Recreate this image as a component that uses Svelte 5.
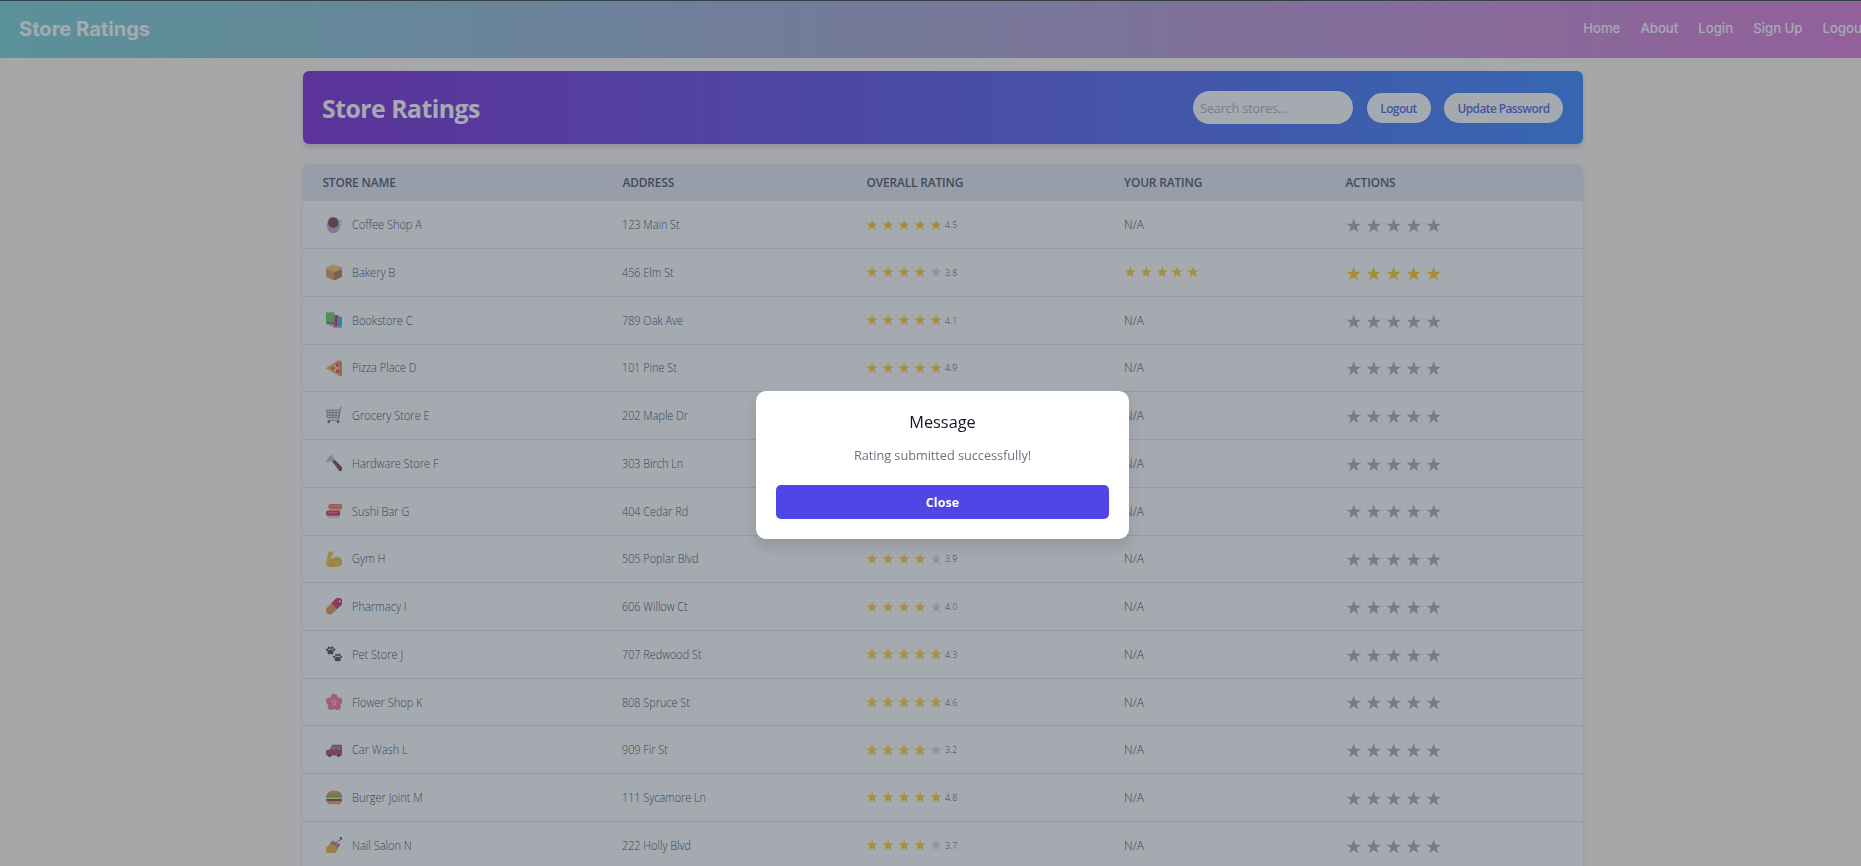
<script>
  const links = ['Home', 'About', 'Login', 'Sign Up', 'Logout'];
  const stores = [
    ['coffee', 'Coffee Shop A', '123 Main St', 5, '4.5'],
    ['bread', 'Bakery B', '456 Elm St', 4, '3.8'],
    ['books', 'Bookstore C', '789 Oak Ave', 5, '4.1'],
    ['pizza', 'Pizza Place D', '101 Pine St', 5, '4.9'],
    ['cart', 'Grocery Store E', '202 Maple Dr', 4, '3.5'],
    ['hammer', 'Hardware Store F', '303 Birch Ln', 4, '4.2'],
    ['sushi', 'Sushi Bar G', '404 Cedar Rd', 5, '4.7'],
    ['gym', 'Gym H', '505 Poplar Blvd', 4, '3.9'],
    ['pill', 'Pharmacy I', '606 Willow Ct', 4, '4.0'],
    ['paws', 'Pet Store J', '707 Redwood St', 5, '4.3'],
    ['flower', 'Flower Shop K', '808 Spruce St', 5, '4.6'],
    ['car', 'Car Wash L', '909 Fir St', 4, '3.2'],
    ['burger', 'Burger Joint M', '111 Sycamore Ln', 5, '4.8'],
    ['nails', 'Nail Salon N', '222 Holly Blvd', 4, '3.7']
  ].map(([icon, name, address, filled, score]) => ({ icon, name, address, filled, score, mine: name === 'Bakery B' ? 5 : 0 }));
  const five = [1, 2, 3, 4, 5];
</script>

{#snippet star(cls)}
  <svg class="star {cls}" viewBox="0 0 20 20"><path d="M10 0.8 12.4 7.4H19.4L13.8 11.6 15.9 18.6 10 14.4 4.1 18.6 6.2 11.6 0.6 7.4H7.6Z" /></svg>
{/snippet}

{#snippet glyph(kind)}
  <svg class="icon" viewBox="0 0 16 16">
    {#if kind === 'coffee'}
      <circle cx="12.6" cy="6" r="2.6" fill="none" stroke="#c9b4dc" stroke-width="1.2" />
      <path d="M.8 6C.6 12 2.4 15.8 7.2 15.8S13.8 12 13.6 6Z" fill="#b79fce" />
      <circle cx="7.1" cy="5.6" r="5.7" fill="#a58fb0" /><circle cx="7.1" cy="5.5" r="5" fill="#6b3436" />
    {:else if kind === 'bread'}
      <path d="M0 4 7 .4 16 3.6V12L8 16 0 12.4Z" fill="#c78642" />
      <path d="M0 4 7 .4 16 3.6 15 6 8 8 0 5Z" fill="#f5bd5b" />
      <path d="M8 8 16 5V12L8 16Z" fill="#b56b34" /><path d="M0 5 7.6 8V15.4L.4 12.2Z" fill="#d39652" />
    {:else if kind === 'books'}
      <path d="M7 3H12V15H7Z" fill="#b21b55" /><path d="M11 4.5H16.5V14.5H11Z" fill="#28a6dc" />
      <path d="M0 .4H8.4V11H0Z" fill="#52c94d" /><path d="M0 10H8V12H1Z" fill="#437b50" />
      <path d="M3 12H8V14H3ZM8 14H16V16H8Z" fill="#bda6dc" /><path d="M8 4H9V14H8Z" fill="#ef4777" />
    {:else if kind === 'pizza'}
      <path d="M0 8 12 .6C15 -.4 15.8 2 15.8 5V13C15.8 16 14.5 16.2 13 15.4Z" fill="#d98a36" /><path d="M1.5 8 12 2.2C13.6 5 13.6 11 12.8 14.2Z" fill="#ffc657" />
      <g fill="#d34440"><circle cx="11" cy="4.8" r="1.8" /><circle cx="6.5" cy="8" r="1.7" /><circle cx="11.6" cy="11" r="1.9" /></g>
    {:else if kind === 'cart'}
      <path d="M.7 3H13.5L12.5 10.5H1.5ZM1 5.5H13M1.3 8H12.7M3.6 3 4 10.5M6.7 3V10.5M10 3 9.6 10.5M15.8 .5 14 1 12 13H2" fill="none" stroke="#7d768c" stroke-width=".9" />
      <circle cx="2.7" cy="14.5" r="1.3" fill="#55495f" /><circle cx="11.8" cy="14.5" r="1.3" fill="#55495f" />
    {:else if kind === 'hammer'}
      <path d="M5 5 7.2 3.4 16 12.4 16 14 14.5 15.8 13 15.5Z" fill="#5e2c38" /><path d="M6 5.5 14 14" stroke="#8a4c50" />
      <path d="M.2 5.8C2 2 4 .2 7.5 .3L6.6 2 8.6 4.5 5.4 7.3 3.6 5.4 1.7 7.8Z" fill="#c3b2cd" />
    {:else if kind === 'sushi'}
      <rect x="3" y="4.4" width="12" height="3.6" rx="1.2" fill="#d9c2e4" /><rect x="2.2" y="1" width="13.8" height="4.8" rx="2.2" fill="#f4693b" />
      <rect x="1" y="11" width="12.4" height="4" rx="1.5" fill="#dcc6e8" /><rect x="0" y="7.4" width="14" height="5" rx="2" fill="#d3214d" /><path d="M4 3H14M2 9.5H12" stroke="#ff7e68" stroke-width=".7" />
    {:else if kind === 'gym'}
      <path d="M2.4 1C3.5 0 6 0 7.2 1L7 4.5 5 5 5.2 8C7 6.4 8.5 5.4 11 5.6 14 5.8 16 8.2 16 11.3 15.8 14.8 12.5 16 9 16 4.5 16.2 .3 15.7 0 12.5Z" fill="#f5bb2e" />
      <path d="M5 8 6.6 9.5C9 7.2 13 7.5 14 10M2.2 13.7Q6 15 9 13" fill="none" stroke="#d98b22" stroke-width=".8" />
    {:else if kind === 'pill'}
      <g transform="rotate(-45 8 8)"><rect x="-1.8" y="4" width="19.6" height="8" rx="4" fill="#e88943" /><path d="M8 4H13.8A4 4 0 0 1 13.8 12H8Z" fill="#bf1f5d" /></g>
      <circle cx="13.4" cy="3.3" r="1.1" fill="#f7c5da" />
    {:else if kind === 'paws'}
      <g fill="#3e3154">
        <path d="M1.4 6C1.4 4 3 3.4 4.3 3.4S7.3 4 7.4 6 6.2 8.2 4.5 7.7C3 8.2 1.4 8 1.4 6Z" /><circle cx="1" cy="3.6" r="1.2" /><circle cx="3.1" cy="1.8" r="1.3" /><circle cx="6" cy="1.8" r="1.3" /><circle cx="8" cy="3.6" r="1.2" />
        <path d="M8.4 13C8.4 11 10 10.4 11.3 10.4S14.3 11 14.4 13 13.2 15.2 11.5 14.8C10 15.2 8.4 15 8.4 13Z" /><circle cx="8" cy="10.6" r="1.2" /><circle cx="10.2" cy="8.8" r="1.3" /><circle cx="13" cy="8.8" r="1.3" /><circle cx="15" cy="10.6" r="1.2" />
      </g>
    {:else if kind === 'flower'}
      <g fill="#f4688e"><circle cx="8" cy="3.4" r="3.4" /><circle cx="3.4" cy="6.8" r="3.4" /><circle cx="12.6" cy="6.8" r="3.4" /><circle cx="5" cy="12.2" r="3.5" /><circle cx="11" cy="12.2" r="3.5" /></g>
      <path d="M8 5V9M5 7.3 8 8.5 11 7.3M8 8.5 6 11.2M8 8.5 10 11.2" fill="none" stroke="#ffd5df" stroke-width=".8" /><circle cx="8" cy="8.3" r="1" fill="#cc3065" />
    {:else if kind === 'car'}
      <path d="M6 2.6H14.4Q15.6 2.6 15.8 4.4L16 13H0V9L1 7.8 4 7Z" fill="#c8204f" /><path d="M6.6 3.8H9.4V7.2H4.8ZM10.5 3.8H14L14.6 7.2H10.5Z" fill="#4a9fd6" />
      <path d="M0 11.4H16V13H0Z" fill="#7e4b86" />
      <g fill="#32283f" stroke="#8b8092" stroke-width=".8"><circle cx="3.7" cy="12.6" r="1.9" /><circle cx="12.3" cy="12.6" r="1.9" /></g>
    {:else if kind === 'burger'}
      <path d="M.5 7C.5 3.2 4 1.6 8 1.6S15.5 3.2 15.5 7Z" fill="#cf8643" /><path d="M3 4Q7 2 12 3.5" fill="none" stroke="#eba965" />
      <rect x="0" y="6.8" width="16" height="2.2" rx="1" fill="#6ba236" /><path d="M1 8H15L10 10.5Z" fill="#ffc83a" />
      <rect x="0" y="9.8" width="16" height="1.8" rx=".9" fill="#7d3b36" /><path d="M.7 11.6H15.3Q15 15 12.5 15H3.5Q1 15 .7 11.6Z" fill="#d99a62" />
    {:else}
      <path d="M0 10 7.4 4 13.6 7.6 9.4 16H0Z" fill="#f2b233" /><path d="M2 11.5 8 6.4M4 13.5 10.5 8M6.4 15.2 12 9.5" stroke="#c5812a" stroke-width=".7" />
      <g stroke="#a04aa0" stroke-width="1.9" stroke-linecap="round"><path d="M5.3 6 7 4.5M8.2 7.2 10 5.6M11 9.2 12.8 7.2" /></g>
      <path d="M11.6 4.6 13.4 2.6" stroke="#a897b7" stroke-width="1.8" /><path d="M13 .7 16 0 15.3 3.4Z" fill="#42345b" />
    {/if}
  </svg>
{/snippet}

<div class="page">
  <nav>
    <span class="brand">Store Ratings</span>
    <div class="links">{#each links as link}<span>{link}</span>{/each}</div>
  </nav>
  <main>
    <header>
      <h1>Store Ratings</h1>
      <div class="tools">
        <input placeholder="Search stores..." />
        <button class="logout">Logout</button>
        <button class="update">Update Password</button>
      </div>
    </header>
    <section>
      <div class="row head"><span>Store Name</span><span>Address</span><span>Overall Rating</span><span>Your Rating</span><span>Actions</span></div>
      {#each stores as s}
        <div class="row">
          <span class="name">{@render glyph(s.icon)}<span class="text">{s.name}</span></span>
          <span class="text address">{s.address}</span>
          <span class="stars">{#each five as n}{@render star(n <= s.filled ? 'gold' : 'empty')}{/each}<small>{s.score}</small></span>
          {#if s.mine}
            <span class="stars">{#each five as n}{@render star('gold')}{/each}</span>
          {:else}
            <span class="text na">N/A</span>
          {/if}
          <span class="stars big">{#each five as n}{@render star(n <= s.mine ? 'amber' : 'idle')}{/each}</span>
        </div>
      {/each}
    </section>
  </main>
</div>
<div class="overlay">
  <div class="modal">
    <h2>Message</h2>
    <p>Rating submitted successfully!</p>
    <button class="close">Close</button>
  </div>
</div>

<style>
  :global(body) { margin: 0; overflow: hidden; }
  * { box-sizing: border-box; }
  .page { height: 866px; overflow: hidden; background: #fff8ef; font-family: 'Open Sans', sans-serif; }
  nav {
    height: 58px; display: flex; align-items: center; justify-content: space-between;
    border-top: 1px solid #1e2b2e; padding: 0 0 2px 19px; overflow: hidden; white-space: nowrap;
    background: linear-gradient(90deg, #69cdcf, #da6ad2); color: #fff; font-family: Inter, sans-serif;
  }
  .brand { font-size: 20.1px; font-weight: 700; }
  .links { display: flex; gap: 20px; margin: 0 -5.5px 1px 0; font-size: 13.2px; font-weight: 500; }
  main { width: 1280px; margin: 13px auto 0 303px; }
  header {
    height: 73px; border-radius: 6px; padding: 0 20px 0 19px; display: flex; align-items: center; justify-content: space-between;
    background: linear-gradient(90deg, #6d10cd, #2377ff); box-shadow: 0 3px 5px rgba(0, 0, 0, .18);
  }
  h1 { margin: 0; color: #fff; font-size: 24.8px; font-weight: 700; letter-spacing: -.5px; }
  .tools { display: flex; align-items: center; gap: 13.5px; }
  input {
    width: 160px; height: 33px; border: 0; border-radius: 17px; padding: 0 7px; background: #fff;
    font: 400 12.8px 'Open Sans', sans-serif; letter-spacing: -.22px;
  }
  input::placeholder { color: #9ca3af; }
  .tools button {
    height: 30px; border: 0; border-radius: 15px; padding: 0; background: #fff; color: #3b50e0;
    font: 600 11.9px 'Open Sans', sans-serif; letter-spacing: -.55px; white-space: nowrap;
  }
  .tools .logout { width: 64px; }
  .tools .update { width: 119px; }
  section { margin-top: 20px; border-radius: 6px 6px 0 0; overflow: hidden; background: #fff; box-shadow: 0 2px 5px rgba(0, 0, 0, .12); }
  .row {
    display: grid; grid-template-columns: 300px 244px 257.6px 221.4px 1fr; align-items: center;
    height: 47.74px; padding-left: 19.4px; border-bottom: 1px solid #dbdee8;
    font-size: 12.6px; font-weight: 300; color: #26303f; white-space: nowrap;
  }
  .head {
    height: 37.4px; padding-bottom: 1px; background: #e2e6f1; border: 0; text-transform: uppercase; font-weight: 600;
    font-size: 11.9px; letter-spacing: -.12px; color: #374151;
  }
  .text { transform: scaleX(.875); transform-origin: left; }
  .address { transform: scaleX(.86); }
  .na { transform: scaleX(.95); }
  .name { display: flex; align-items: center; gap: 10px; padding-left: 3.6px; }
  .icon { width: 16.4px; height: 16.4px; }
  .stars { display: flex; align-items: center; gap: 3.8px; }
  .star { width: 12.2px; height: 12.2px; margin-right: -.2px; }
  .big { gap: 5px; padding: 2px 0 0 .5px; }
  .big .star { width: 15.4px; height: 15.4px; margin-right: -.4px; }
  .gold { fill: #facc0c; }
  .amber { fill: #fec50e; }
  .empty { fill: #d1d5db; }
  .idle { fill: #9ca3b3; }
  small { font-size: 9.8px; transform: scaleX(.9); transform-origin: left; }
  .overlay {
    position: fixed; inset: 0; display: flex; align-items: flex-start; justify-content: center;
    padding: 391px 0 0 24px; background: rgba(75, 85, 99, .5);
  }
  .modal {
    width: 373px; height: 148px; padding: 20px; border-radius: 10px; background: #fff; text-align: center;
    box-shadow: 0 8px 14px rgba(0, 0, 0, .12); font-family: 'Open Sans', sans-serif;
  }
  h2 { margin: 0; font-size: 16.3px; line-height: 22px; font-weight: 500; color: #111827; }
  p { margin: 12px 0 19px; font-size: 12.8px; line-height: 21px; letter-spacing: -.07px; color: #6b7280; }
  .close {
    width: 100%; height: 34px; border: 0; border-radius: 5px; background: #4f46e5; color: #fff;
    font: 700 12.6px 'Open Sans', sans-serif;
  }
</style>
